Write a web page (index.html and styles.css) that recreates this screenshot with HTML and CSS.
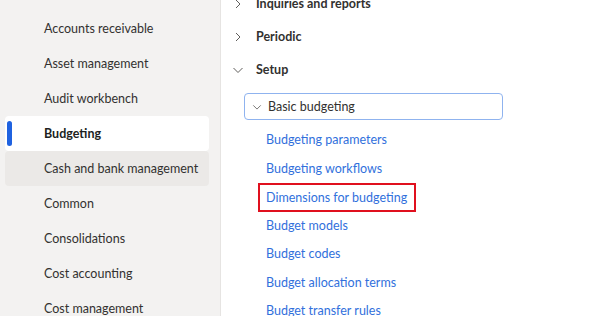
FILE: index.html
```html
<!DOCTYPE html>
<html>
<head>
    <meta charset="utf-8">
    <title>Budgeting</title>
    <link rel="stylesheet" href="styles.css">
</head>
<body>
    <div class="page">
        <nav class="sidebar">
            <div class="side-item">Accounts receivable</div>
            <div class="side-item">Asset management</div>
            <div class="side-item">Audit workbench</div>
            <div class="side-item selected">Budgeting</div>
            <div class="side-item hovered">Cash and bank management</div>
            <div class="side-item">Common</div>
            <div class="side-item">Consolidations</div>
            <div class="side-item">Cost accounting</div>
            <div class="side-item">Cost management</div>
        </nav>
        <main class="content">
            <div class="group-row cut">
                <svg class="chev" viewBox="0 0 12 12"><path d="M4 2 L8 6 L4 10"/></svg>
                <span>Inquiries and reports</span>
            </div>
            <div class="group-row">
                <svg class="chev" viewBox="0 0 12 12"><path d="M4 2 L8 6 L4 10"/></svg>
                <span>Periodic</span>
            </div>
            <div class="group-row">
                <svg class="chev down" viewBox="0 0 12 12"><path d="M1.5 4 L6 8.5 L10.5 4"/></svg>
                <span>Setup</span>
            </div>
            <div class="sub-box">
                <svg class="chev small" viewBox="0 0 12 12"><path d="M1.5 4 L6 8.5 L10.5 4"/></svg>
                <span>Basic budgeting</span>
            </div>
            <ul class="links">
                <li>Budgeting parameters</li>
                <li>Budgeting workflows</li>
                <li><span class="marked">Dimensions for budgeting</span></li>
                <li>Budget models</li>
                <li>Budget codes</li>
                <li>Budget allocation terms</li>
                <li>Budget transfer rules</li>
            </ul>
        </main>
    </div>
</body>
</html>
```

FILE: styles.css
```css
body {
    margin: 0;
    font-family: "Lato", sans-serif;
    background: #ffffff;
    color: #323130;
    overflow: hidden;
}
.page {
    display: flex;
    height: 316px;
}
/* Left navigation */
.sidebar {
    width: 221px;
    background: #f3f2f1;
    border-right: 1px solid #e6e4e2;
    padding-top: 11px;
    box-sizing: border-box;
}
.side-item {
    position: relative;
    height: 35px;
    line-height: 35px;
    margin: 0 11px 0 5px;
    padding-left: 39px;
    font-size: 12.5px;
    border-radius: 4px;
    white-space: nowrap;
}
.side-item.selected {
    background: #ffffff;
    font-weight: 700;
    color: #201f1e;
}
.side-item.selected::before {
    content: "";
    position: absolute;
    left: 2px;
    top: 5px;
    width: 5px;
    height: 25px;
    border-radius: 3px;
    background: #1f62e0;
}
.side-item.hovered {
    background: #ebe9e7;
}
/* Right panel */
.content {
    flex: 1;
    padding-left: 11px;
}
.group-row {
    display: flex;
    align-items: center;
    height: 33px;
    font-size: 12.5px;
    font-weight: 700;
    color: #323130;
}
.group-row.cut {
    margin-top: -13px;
}
.chev {
    width: 12px;
    height: 12px;
    margin-right: 12px;
    fill: none;
    stroke: #605e5c;
    stroke-width: 1;
}
.sub-box {
    display: flex;
    align-items: center;
    width: 259px;
    height: 27px;
    margin: 7px 0 0 12px;
    border: 1px solid #8fb3ef;
    border-radius: 4px;
    box-sizing: border-box;
    padding-left: 7px;
    font-size: 12.5px;
    color: #323130;
}
.chev.small {
    width: 10px;
    height: 10px;
    margin-right: 6px;
}
.links {
    list-style: none;
    margin: 6px 0 0 0;
    padding: 0 0 0 34px;
}
.links li {
    height: 28.5px;
    line-height: 28.5px;
    font-size: 12.5px;
    color: #3170dc;
    white-space: nowrap;
}
.marked {
    display: inline-block;
    line-height: 25px;
    margin-left: -8px;
    padding: 0 7px 0 6px;
    border: 2px solid #e0101e;
}
```
